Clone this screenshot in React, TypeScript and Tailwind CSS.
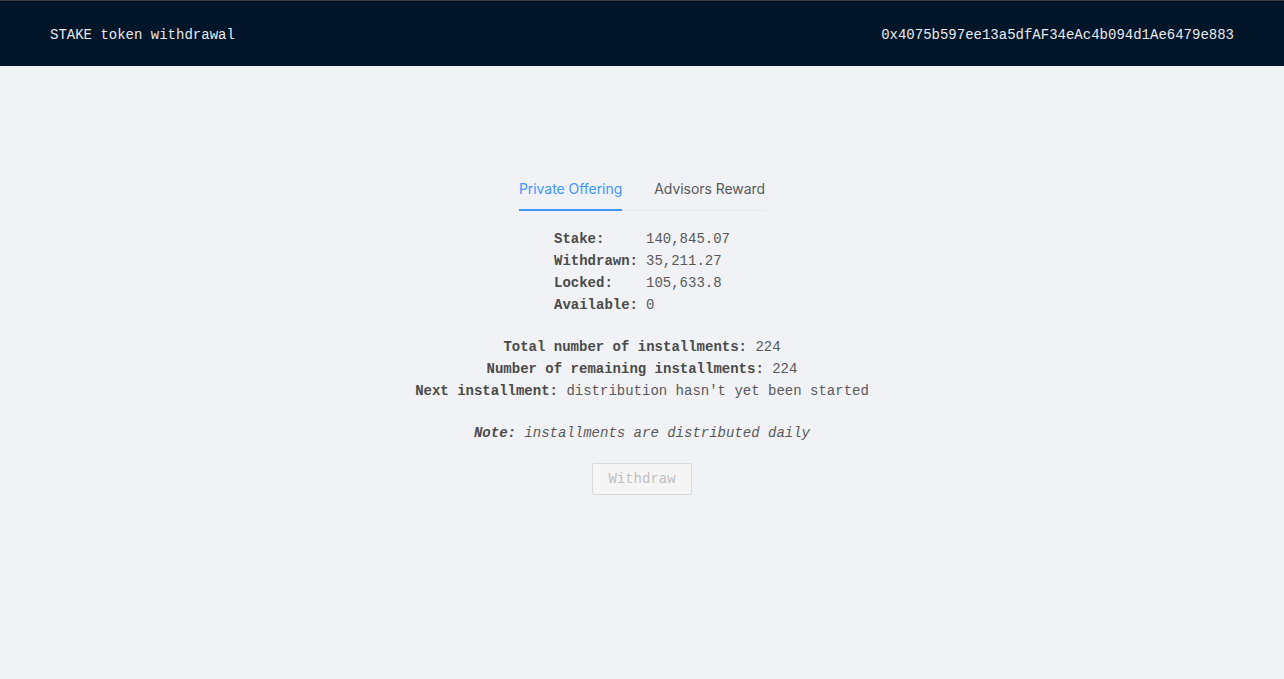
const mono = "font-['Liberation_Mono','DejaVu_Sans_Mono',monospace]";

const rows: [string, string][] = [
  ["Stake:", "140,845.07"],
  ["Withdrawn:", "35,211.27"],
  ["Locked:", "105,633.8"],
  ["Available:", "0"],
];

export default function App() {
  return (
    <div className="min-h-[679px] bg-[#f0f2f5] flex flex-col">
      <header className={`h-[66px] bg-[#031528] border-t border-[#3a3f47] flex items-center justify-between px-[50px] pt-[3px] text-[14px] text-[#e8eaed] ${mono}`}>
        <span>STAKE token withdrawal</span>
        <span>0x4075b597ee13a5dfAF34eAc4b094d1Ae6479e883</span>
      </header>

      <main className="flex flex-col items-center pt-[100px]">
        <nav className="flex gap-8 border-b border-[#e6e8eb] font-['Inter','Noto_Sans',sans-serif] text-[14px] leading-[22px] tracking-[-0.05px] mb-[17px]">
          <button className="pt-3 pb-[9px] text-[#4096ff] border-b-2 border-[#4096ff] -mb-px">Private Offering</button>
          <button className="pt-3 pb-[9px] text-[#595959] border-b-2 border-transparent -mb-px">Advisors Reward</button>
        </nav>

        <div className={`text-[14px] leading-[22px] text-[#595959] ${mono}`}>
          <div className="grid grid-cols-[auto_auto] gap-x-[8px]">
            {rows.map(([k, v]) => (
              <div key={k} className="contents">
                <span className="font-bold text-[#4a4a4a]">{k}</span>
                <span>{v}</span>
              </div>
            ))}
          </div>
        </div>

        <div className={`mt-5 text-center text-[14px] leading-[22px] text-[#595959] ${mono}`}>
          <p><b className="text-[#4a4a4a]">Total number of installments:</b> 224</p>
          <p><b className="text-[#4a4a4a]">Number of remaining installments:</b> 224</p>
          <p><b className="text-[#4a4a4a]">Next installment:</b> distribution hasn't yet been started</p>
        </div>

        <p className={`mt-5 italic text-[14px] leading-[22px] text-[#595959] ${mono}`}>
          <b className="text-[#4a4a4a]">Note:</b> installments are distributed daily
        </p>

        <button
          disabled
          className={`mt-[19px] w-[100px] h-[32px] rounded-[2px] border border-[#d9d9d9] bg-[#f5f5f5] text-[#bfbfbf] text-[14px] ${mono}`}
        >
          Withdraw
        </button>
      </main>
    </div>
  );
}
